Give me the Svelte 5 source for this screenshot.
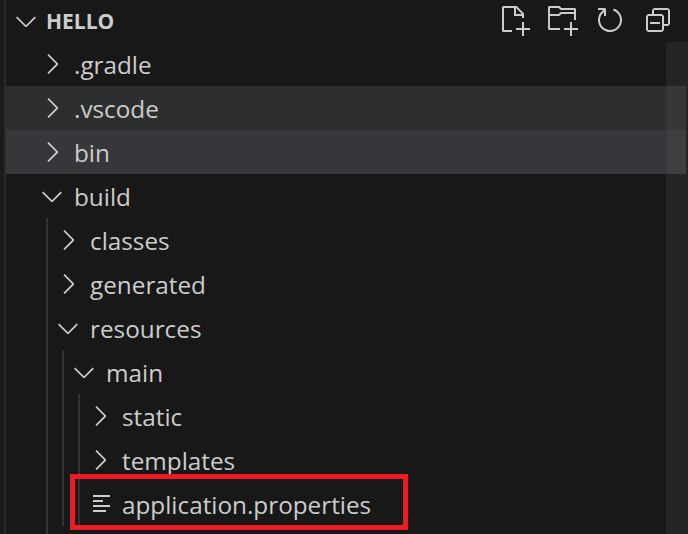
<script>
  const rows = [
    { label: '.gradle', depth: 0, kind: 'closed' },
    { label: '.vscode', depth: 0, kind: 'closed', tone: 'sel' },
    { label: 'bin', depth: 0, kind: 'closed', tone: 'hover' },
    { label: 'build', depth: 0, kind: 'open' },
    { label: 'classes', depth: 1, kind: 'closed' },
    { label: 'generated', depth: 1, kind: 'closed' },
    { label: 'resources', depth: 1, kind: 'open' },
    { label: 'main', depth: 2, kind: 'open' },
    { label: 'static', depth: 3, kind: 'closed' },
    { label: 'templates', depth: 3, kind: 'closed' },
    { label: 'application.properties', depth: 3, kind: 'file' }
  ];
  const chevronDown = 'M7.976 10.072l4.357-4.357.62.618L8.284 11h-.618L3 6.333l.619-.618 4.357 4.357z';
  const chevronRight = 'M10.072 8.024L5.715 3.667l.618-.62L11 7.716v.618L6.333 13l-.618-.619 4.357-4.357z';
</script>

<div class="explorer">
  <div class="gutter"></div>
  <div class="panel">
    <header class="head">
      <svg class="twist head-twist" viewBox="0 0 16 16"><path d={chevronDown} /></svg>
      <span class="title">HELLO</span>
      <div class="actions">
        <svg viewBox="0 0 16 16"><path fill-rule="evenodd" d="M9.5 1.100l3.400 3.500.100.400v2h-1V6H8V2H3v11h4v1H2.500l-.5-.5v-12l.5-.5h6.700l.3.100zM9 2v3h2.900L9 2zm4 14h-1v-3H9v-1h3V9h1v3h3v1h-3v3z" /></svg>
        <svg viewBox="0 0 16 16"><path fill-rule="evenodd" d="M14.500 2H7.710l-.85-.85L6.510 1h-5l-.5.500v11l.5.500H7v-1H1.990V6h4.490l.35-.15.86-.86H14v1.500l-.001 1.510h1.010V2.500L14.500 2zm-.51 2h-6.500l-.35.150-.86.860H2v-3h4.290l.85.850.36.150H14l-.01.990zM13 16h-1v-3H9v-1h3V9h1v3h3v1h-3v3z" /></svg>
        <svg viewBox="0 0 16 16"><path fill-rule="evenodd" d="M4.681 3H2V2h3.500l.5.500V6H5V4a5 5 0 1 0 4.530-.761l.302-.954A6 6 0 1 1 4.681 3z" /></svg>
        <svg viewBox="0 0 16 16"><path d="M9 9H4v1h5V9z" /><path fill-rule="evenodd" d="M5 3l1-1h7l1 1v7l-1 1h-2v2l-1 1H3l-1-1V6l1-1h2V3zm1 2h4l1 1v4h2V3H6v2zm4 1H3v7h7V6z" /></svg>
      </div>
    </header>
    <ul class="tree">
      {#each rows as row}
        <li class="row {row.tone ?? ''} d{row.depth}">
          {#each Array(row.depth) as _, i}
            <span class="guide g{i}"></span>
          {/each}
          {#if row.kind === 'file'}
            <svg class="twist file" viewBox="0 0 32 32"><path d="M9 8h17M9 13h10M9 18h17M9 23h13" /></svg>
          {:else}
            <svg class="twist" viewBox="0 0 16 16"><path d={row.kind === 'open' ? chevronDown : chevronRight} /></svg>
          {/if}
          <span class="label">{row.label}</span>
          {#if row.kind === 'file'}<span class="callout"></span>{/if}
        </li>
      {/each}
      <li class="row d1"><span class="guide g0"></span></li>
    </ul>
    <div class="scroll"></div>
  </div>
</div>

<style>
  :global(body) { margin: 0; background: #181818; }
  .explorer { display: flex; width: 688px; height: 534px; overflow: hidden; background: #181818; color: #cccccc; font-family: "Open Sans", "Noto Sans", sans-serif; }
  .gutter { width: 4px; flex: none; background: #1b1b1b; border-right: 2px solid #2b2b2b; }
  .panel { position: relative; flex: 1; min-width: 0; }
  .head { display: flex; align-items: center; height: 42px; padding-left: 4px; box-sizing: border-box; padding-bottom: 1px; }
  .twist { width: 32px; height: 32px; flex: none; fill: #cccccc; }
  .head-twist { margin-right: 5px; }
  .title { font-size: 21px; font-weight: 700; margin-left: -1px; }
  .actions { display: flex; gap: 16px; align-self: flex-start; margin: 4px 14px 0 auto; }
  .actions svg { width: 32px; height: 32px; fill: #cccccc; }
  .tree { list-style: none; margin: 0; padding: 0; }
  .row { position: relative; display: flex; align-items: center; height: 44px; margin-right: 2px; padding-left: 30px; font-size: 24.300px; }
  .row.d1 { padding-left: 46px; }
  .row.d2 { padding-left: 62px; }
  .row.d3 { padding-left: 78px; }
  .row.sel { background: #2d2e30; }
  .row.hover { background: #37373b; }
  .label { margin-left: 6px; }
  .file { fill: none; stroke: #cccccc; stroke-width: 2.200; }
  .guide { position: absolute; top: 0; bottom: 0; width: 2px; background: #333333; }
  .g0 { left: 40px; }
  .g1 { left: 56px; }
  .g2 { left: 72px; }
  .callout { position: absolute; left: 64px; top: -8px; width: 328px; height: 46px; border: 5px solid #ed1c24; }
  .scroll { position: absolute; right: 0; top: 42px; bottom: 0; width: 22px; background: rgba(121, 121, 121, 0.12); }
</style>
